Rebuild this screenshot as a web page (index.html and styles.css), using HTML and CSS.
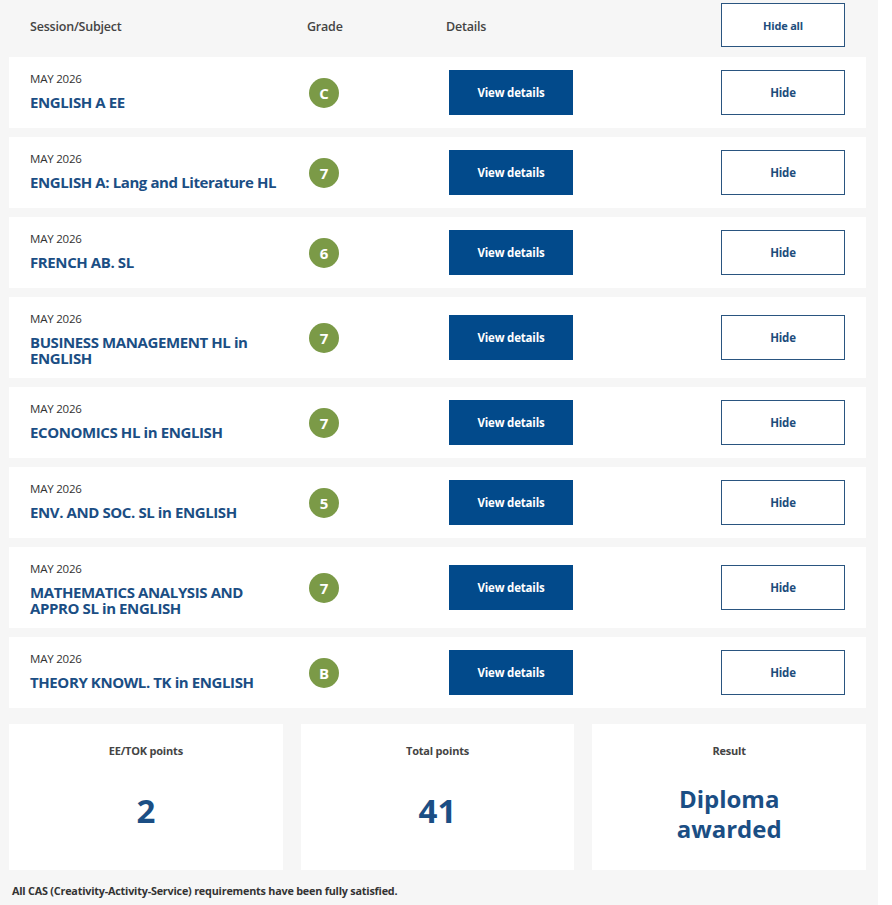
FILE: index.html
```html
<!DOCTYPE html>
<html lang="en">
<head>
<meta charset="utf-8">
<title>Results</title>
<link rel="stylesheet" href="styles.css">
</head>
<body>
<div class="page">
  <div class="head">
    <div class="h-col">Session/Subject</div>
    <div class="h-col">Grade</div>
    <div class="h-col">Details</div>
    <div class="h-btn"><button class="btn-outline">Hide all</button></div>
  </div>

  <div class="rows">
    <div class="row">
      <div class="subj"><div class="date">MAY 2026</div><div class="name">ENGLISH A EE</div></div>
      <div class="grade"><span class="dot">C</span></div>
      <div class="det"><button class="btn-solid">View details</button></div>
      <div class="hide"><button class="btn-outline">Hide</button></div>
    </div>
    <div class="row">
      <div class="subj"><div class="date">MAY 2026</div><div class="name">ENGLISH A: Lang and Literature HL</div></div>
      <div class="grade"><span class="dot">7</span></div>
      <div class="det"><button class="btn-solid">View details</button></div>
      <div class="hide"><button class="btn-outline">Hide</button></div>
    </div>
    <div class="row">
      <div class="subj"><div class="date">MAY 2026</div><div class="name">FRENCH AB. SL</div></div>
      <div class="grade"><span class="dot">6</span></div>
      <div class="det"><button class="btn-solid">View details</button></div>
      <div class="hide"><button class="btn-outline">Hide</button></div>
    </div>
    <div class="row">
      <div class="subj"><div class="date">MAY 2026</div><div class="name">BUSINESS MANAGEMENT HL in ENGLISH</div></div>
      <div class="grade"><span class="dot">7</span></div>
      <div class="det"><button class="btn-solid">View details</button></div>
      <div class="hide"><button class="btn-outline">Hide</button></div>
    </div>
    <div class="row">
      <div class="subj"><div class="date">MAY 2026</div><div class="name">ECONOMICS HL in ENGLISH</div></div>
      <div class="grade"><span class="dot">7</span></div>
      <div class="det"><button class="btn-solid">View details</button></div>
      <div class="hide"><button class="btn-outline">Hide</button></div>
    </div>
    <div class="row">
      <div class="subj"><div class="date">MAY 2026</div><div class="name">ENV. AND SOC. SL in ENGLISH</div></div>
      <div class="grade"><span class="dot">5</span></div>
      <div class="det"><button class="btn-solid">View details</button></div>
      <div class="hide"><button class="btn-outline">Hide</button></div>
    </div>
    <div class="row">
      <div class="subj"><div class="date">MAY 2026</div><div class="name">MATHEMATICS ANALYSIS AND APPRO SL in ENGLISH</div></div>
      <div class="grade"><span class="dot">7</span></div>
      <div class="det"><button class="btn-solid">View details</button></div>
      <div class="hide"><button class="btn-outline">Hide</button></div>
    </div>
    <div class="row">
      <div class="subj"><div class="date">MAY 2026</div><div class="name">THEORY KNOWL. TK in ENGLISH</div></div>
      <div class="grade"><span class="dot">B</span></div>
      <div class="det"><button class="btn-solid">View details</button></div>
      <div class="hide"><button class="btn-outline">Hide</button></div>
    </div>
  </div>

  <div class="summary">
    <div class="card"><div class="label">EE/TOK points</div><div class="big">2</div></div>
    <div class="card"><div class="label">Total points</div><div class="big">41</div></div>
    <div class="card"><div class="label">Result</div><div class="big result">Diploma<br>awarded</div></div>
  </div>

  <p class="note">All CAS (Creativity-Activity-Service) requirements have been fully satisfied.</p>
</div>
</body>
</html>
```

FILE: styles.css
```css
html, body {
  margin: 0;
  padding: 0;
  background: #ffffff;
}
body {
  font-family: "Open Sans", "Noto Sans", "Liberation Sans", sans-serif;
  color: #333333;
}
.page {
  width: 878px;
  height: 905px;
  box-sizing: border-box;
  background: #f6f6f6;
  padding: 3px 12px 0 9px;
}
.head {
  display: grid;
  grid-template-columns: 277px 139px 275px 124px;
  padding: 0 21px;
  height: 44px;
  align-items: center;
  margin-bottom: 10px;
}
.h-col {
  font-size: 12.5px;
  font-weight: 600;
  color: #444444;
  letter-spacing: -0.2px;
  padding-top: 2px;
}
.h-btn { display: flex; }
.rows {
  display: flex;
  flex-direction: column;
  gap: 9px;
}
.row {
  display: grid;
  grid-template-columns: 277px 139px 275px 124px;
  align-items: center;
  background: #ffffff;
  padding: 12px 21px;
  min-height: 71px;
  box-sizing: border-box;
}
.subj {
  align-self: start;
  padding-right: 20px;
}
.date {
  font-size: 11.5px;
  line-height: 20px;
  color: #333333;
  letter-spacing: -0.2px;
}
.name {
  margin-top: 5px;
  font-size: 15px;
  line-height: 16px;
  font-weight: 700;
  color: #1b4e84;
  letter-spacing: -0.4px;
}
.grade { display: flex; }
.dot {
  width: 30px;
  height: 30px;
  border-radius: 50%;
  background: #7b9a47;
  color: #ffffff;
  font-weight: 700;
  font-size: 15px;
  display: flex;
  align-items: center;
  justify-content: center;
  margin-left: 2px;
}
.det { display: flex; padding-left: 3px; }
.hide { display: flex; }
button {
  font-family: inherit;
  cursor: pointer;
  margin: 0;
}
.btn-solid {
  width: 124px;
  height: 45px;
  background: #024a8b;
  border: none;
  color: #ffffff;
  font-size: 11.5px;
  font-weight: 700;
  letter-spacing: -0.2px;
}
.btn-outline {
  width: 124px;
  height: 45px;
  background: #ffffff;
  border: 1px solid #2a5580;
  color: #1d4d7c;
  font-size: 11.5px;
  font-weight: 700;
  letter-spacing: -0.2px;
}
.h-btn .btn-outline { height: 44px; font-size: 11px; }
.summary {
  display: grid;
  grid-template-columns: repeat(3, 1fr);
  gap: 18px;
  margin-top: 16px;
}
.card {
  background: #ffffff;
  height: 146px;
  display: flex;
  flex-direction: column;
  align-items: center;
  padding-top: 20px;
  box-sizing: border-box;
}
.label {
  font-size: 11px;
  font-weight: 700;
  color: #444444;
  line-height: 14px;
  letter-spacing: -0.2px;
}
.big {
  flex: 1;
  display: flex;
  align-items: center;
  justify-content: center;
  text-align: center;
  font-size: 33px;
  font-weight: 700;
  color: #1b4e84;
  padding-bottom: 8px;
}
.result {
  font-size: 24px;
  line-height: 30px;
  padding-bottom: 0;
}
.note {
  margin: 13px 0 0 3px;
  font-size: 10.8px;
  font-weight: 700;
  color: #333333;
  letter-spacing: -0.2px;
}
```
